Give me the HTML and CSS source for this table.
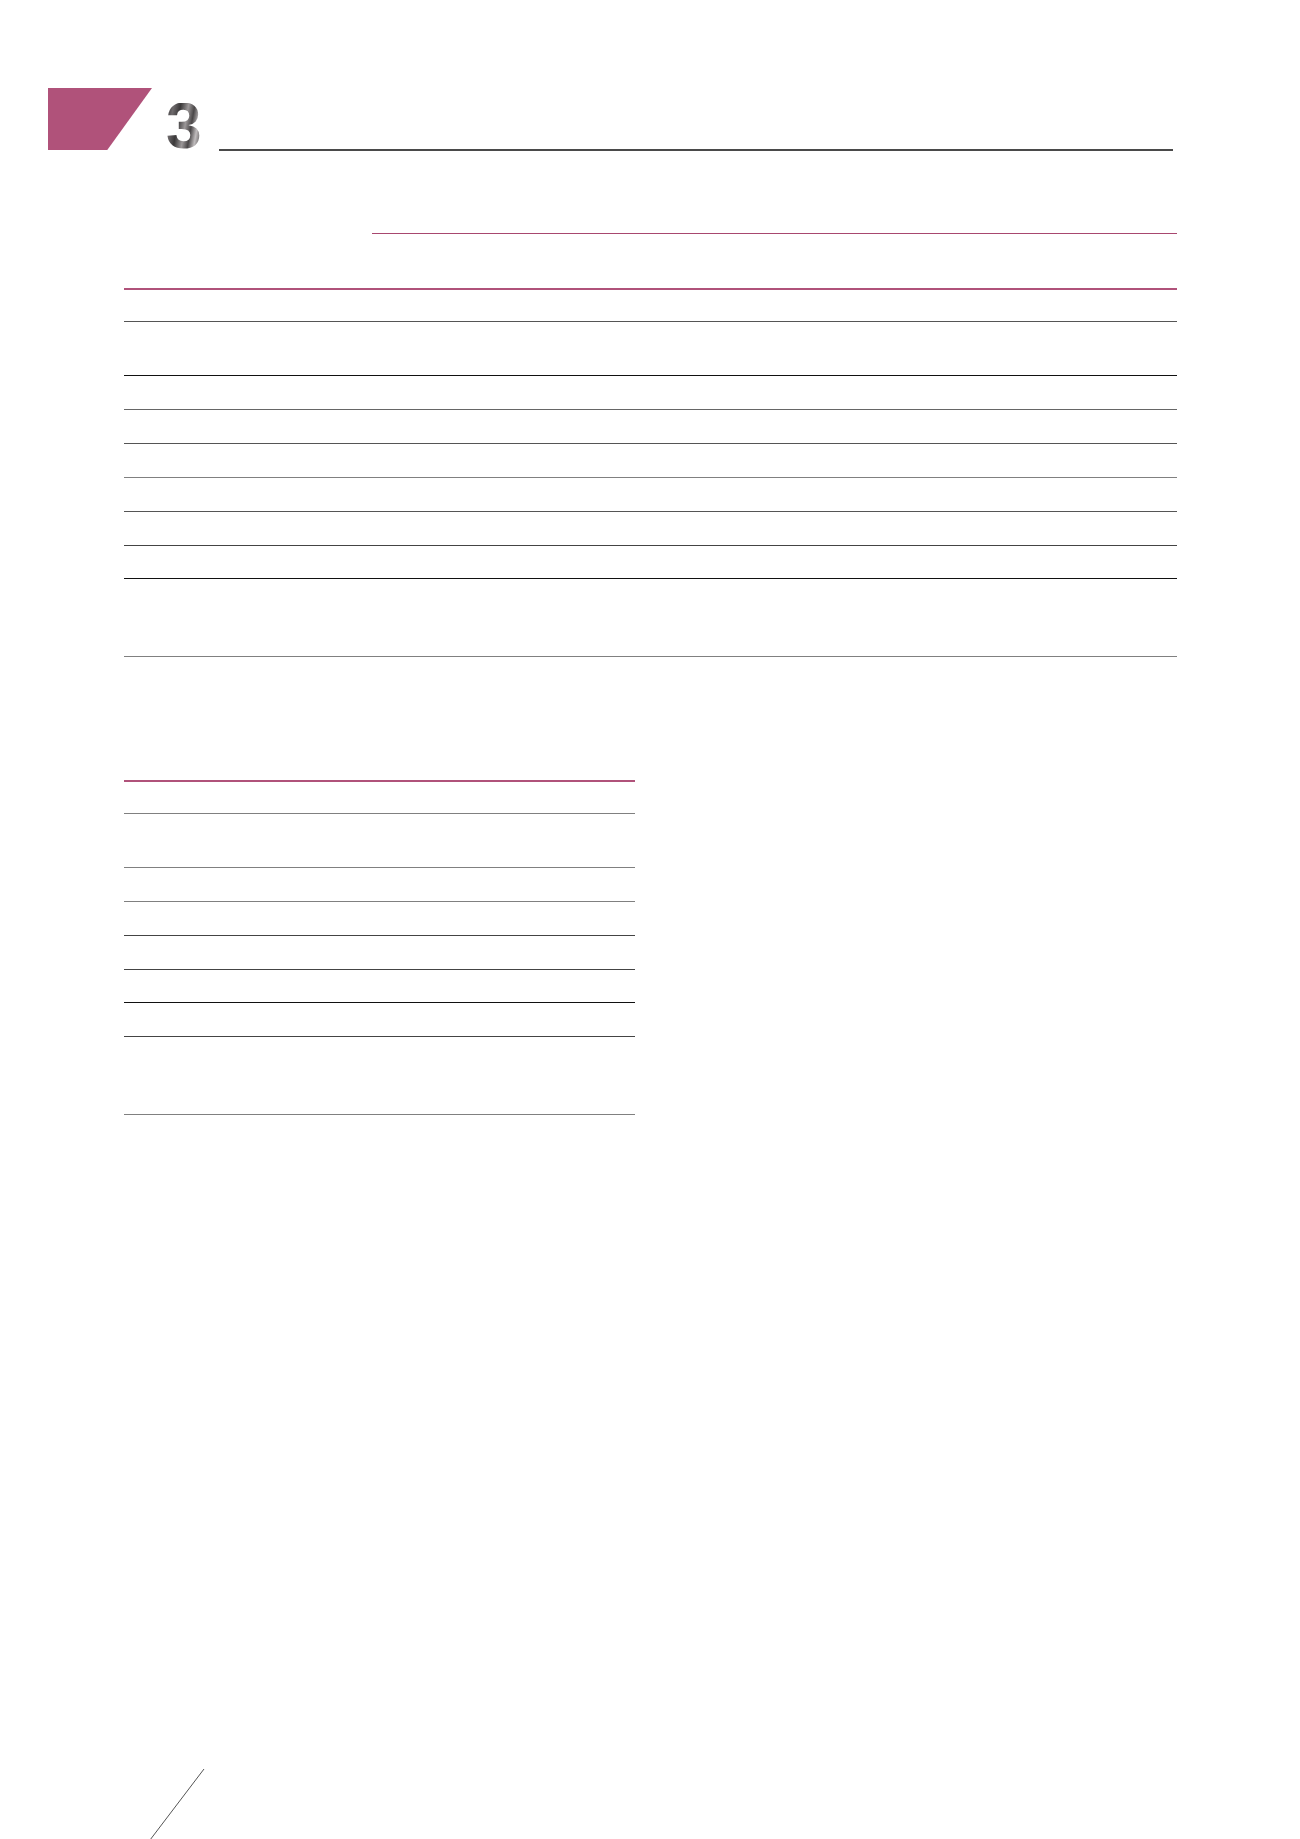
FILE: index.html
```html
<!DOCTYPE html>
<html lang="en">
<head>
<meta charset="utf-8">
<title>Section 3</title>
<link rel="stylesheet" href="styles.css">
</head>
<body>
<div class="page">
  <header class="chapter">
    <div class="tab"></div>
    <div class="num">3</div>
    <div class="rule"></div>
  </header>

  <section class="t1">
    <div class="row grp"><div class="c"></div><div class="c span4"></div></div>
    <div class="row head2 pinkthick"><div class="c"></div><div class="c"></div><div class="c"></div><div class="c"></div><div class="c"></div></div>
    <div class="row h32 g55"><div class="c"></div><div class="c"></div><div class="c"></div><div class="c"></div><div class="c"></div></div>
    <div class="row h54 g00"><div class="c"></div><div class="c"></div><div class="c"></div><div class="c"></div><div class="c"></div></div>
    <div class="row h34 g66"><div class="c"></div><div class="c"></div><div class="c"></div><div class="c"></div><div class="c"></div></div>
    <div class="row h34 g55"><div class="c"></div><div class="c"></div><div class="c"></div><div class="c"></div><div class="c"></div></div>
    <div class="row h34 g80"><div class="c"></div><div class="c"></div><div class="c"></div><div class="c"></div><div class="c"></div></div>
    <div class="row h34 g55"><div class="c"></div><div class="c"></div><div class="c"></div><div class="c"></div><div class="c"></div></div>
    <div class="row h34 g44"><div class="c"></div><div class="c"></div><div class="c"></div><div class="c"></div><div class="c"></div></div>
    <div class="row h33 g00"><div class="c"></div><div class="c"></div><div class="c"></div><div class="c"></div><div class="c"></div></div>
    <div class="row h78 g80"><div class="c"></div><div class="c"></div><div class="c"></div><div class="c"></div><div class="c"></div></div>
  </section>

  <section class="t2">
    <div class="row h32 g80"><div class="c"></div><div class="c"></div></div>
    <div class="row h54 g80"><div class="c"></div><div class="c"></div></div>
    <div class="row h34 g80"><div class="c"></div><div class="c"></div></div>
    <div class="row h34 g44"><div class="c"></div><div class="c"></div></div>
    <div class="row h34 g44"><div class="c"></div><div class="c"></div></div>
    <div class="row h33 g00"><div class="c"></div><div class="c"></div></div>
    <div class="row h34 g44"><div class="c"></div><div class="c"></div></div>
    <div class="row h78 g80"><div class="c"></div><div class="c"></div></div>
  </section>

  <svg class="slash" width="60" height="71" viewBox="0 0 60 71" aria-hidden="true">
    <line x1="56" y1="0" x2="2" y2="71" stroke="#555" stroke-width="1"/>
  </svg>
</div>
</body>
</html>
```

FILE: styles.css
```css
html, body {
  margin: 0;
  padding: 0;
  background: #fff;
  font-family: "Liberation Sans", Arial, sans-serif;
}

.page {
  width: 1300px;
  height: 1839px;
  overflow: hidden;
}

.chapter {
  display: flex;
  align-items: flex-end;
  padding: 87px 0 0 48px;
  height: 63px;
  box-sizing: content-box;
}

.tab {
  width: 104px;
  height: 62px;
  background: #b0527a;
  clip-path: polygon(0 0, 100% 0, 57% 100%, 0 100%);
  flex: none;
}

.num {
  margin-left: 14px;
  height: 47px;
  line-height: 47px;
  font-size: 64px;
  font-weight: bold;
  background: linear-gradient(100deg, #2e2c2e 0%, #6e6a6c 18%, #3a3839 34%, #9c9899 52%, #4a4748 66%, #c0bcbd 80%, #2f2d2e 100%);
  -webkit-background-clip: text;
  background-clip: text;
  color: transparent;
  flex: none;
}

.rule {
  margin-left: 17px;
  width: 954px;
  height: 0;
  border-bottom: 2px solid #4a4a4a;
  margin-bottom: -1px;
  flex: none;
}

.t1 {
  margin: 50px 0 0 124px;
  width: 1053px;
}

.t1 .row {
  display: grid;
  grid-template-columns: 249px 216px 216px 217px 155px;
}

.t1 .row.grp {
  grid-template-columns: 248px 805px;
  height: 34px;
}

.t1 .grp .span4 {
  border-bottom: 1px solid #a8476f;
}

.t2 {
  margin: 123px 0 0 124px;
  width: 511px;
  border-top: 2px solid #b0527a;
}

.t2 .row {
  display: grid;
  grid-template-columns: 295px 216px;
}

.row {
  box-sizing: border-box;
}

.c {
  box-sizing: border-box;
}

.head2 { height: 56px; }
.pinkthick { border-bottom: 2px solid #b0527a; }

.h32 { height: 32px; }
.h33 { height: 33px; }
.h34 { height: 34px; }
.h54 { height: 54px; }
.h78 { height: 78px; }

.g00 { border-bottom: 1px solid #111; }
.g44 { border-bottom: 1px solid #444; }
.g55 { border-bottom: 1px solid #555; }
.g66 { border-bottom: 1px solid #666; }
.g80 { border-bottom: 1px solid #808080; }

.slash {
  display: block;
  margin: 654px 0 0 148px;
}
```
